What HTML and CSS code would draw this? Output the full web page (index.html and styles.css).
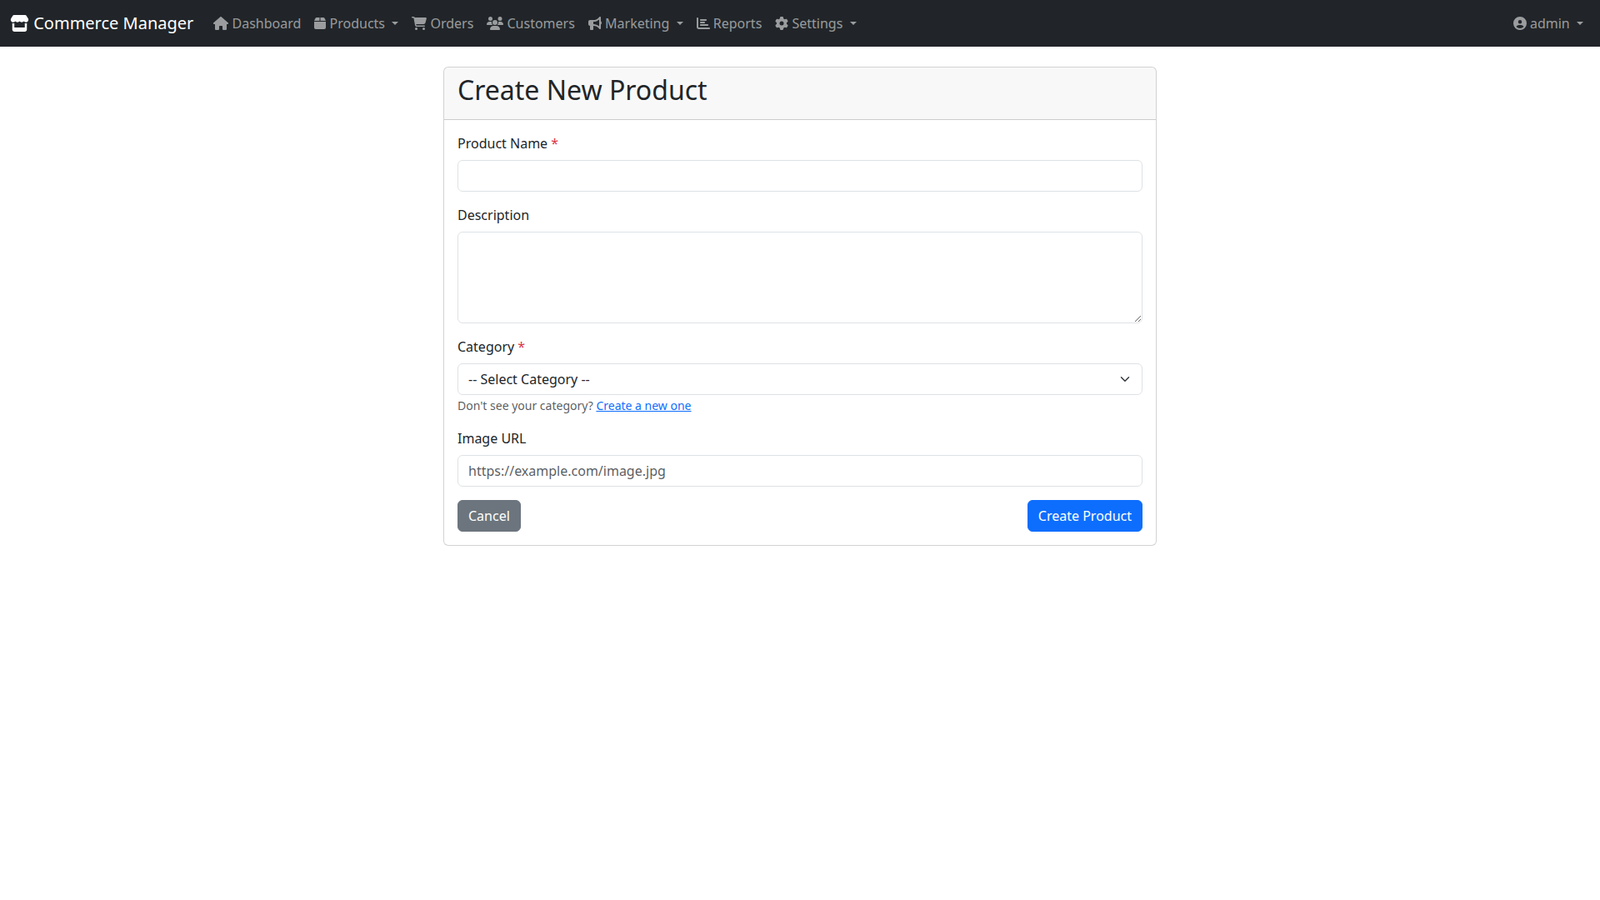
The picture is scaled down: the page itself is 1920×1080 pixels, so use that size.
FILE: index.html
```html
<!DOCTYPE html>
<html lang="en">
<head>
<meta charset="utf-8">
<title>Create New Product - Commerce Manager</title>
<link rel="stylesheet" href="styles.css">
</head>
<body>
<nav class="navbar">
  <a class="brand" href="#"><svg class="icon" viewBox="0 0 576 512"><path d="M547.6 103.8L490.3 13.1C485.2 5 476.1 0 466.4 0H109.6C99.9 0 90.8 5 85.7 13.1L28.3 103.8c-29.6 46.8-3.4 111.9 51.9 119.4c4 .5 8.1 .8 12.1 .8c26.1 0 49.3-11.4 65.2-29c15.9 17.6 39.1 29 65.2 29c26.1 0 49.3-11.4 65.2-29c15.9 17.6 39.1 29 65.2 29c26.2 0 49.3-11.4 65.2-29c16 17.6 39.1 29 65.2 29c4.1 0 8.1-.3 12.1-.8c55.5-7.4 81.8-72.5 52.1-119.4zM499.7 254.9l-.1 0c-5.3 .7-10.7 1.1-16.2 1.1c-12.4 0-24.3-1.9-35.4-5.3V384H128V250.6c-11.2 3.5-23.2 5.4-35.6 5.4c-5.5 0-11-.4-16.3-1.1l-.1 0c-4.1-.6-8.1-1.3-12-2.3V384v64c0 35.3 28.7 64 64 64H448c35.3 0 64-28.7 64-64V384 252.6c-4 1-8 1.8-12.3 2.3z"/></svg> Commerce Manager</a>
  <ul class="nav">
    <li><a class="nav-link" href="#"><svg class="icon" viewBox="0 0 576 512"><path d="M575.8 255.5c0 18-15 32.1-32 32.1h-32l.7 160.2c0 2.7-.2 5.4-.5 8.1V472c0 22.1-17.9 40-40 40H456c-1.1 0-2.2 0-3.3-.1c-1.4 .1-2.8 .1-4.2 .1H416 392c-22.1 0-40-17.9-40-40V448 384c0-17.7-14.3-32-32-32H256c-17.7 0-32 14.3-32 32v64 24c0 22.1-17.9 40-40 40H160 128.1c-1.5 0-3-.1-4.5-.2c-1.2 .1-2.4 .2-3.6 .2H104c-22.1 0-40-17.9-40-40V360c0-.9 0-1.9 .1-2.8V287.6H32c-18 0-32-14-32-32.1c0-9 3-17 10-24L266.4 8c7-7 15-8 22-8s15 2 21 7L564.8 231.5c8 7 12 15 11 24z"/></svg> Dashboard</a></li>
    <li><a class="nav-link toggle" href="#"><svg class="icon" viewBox="0 0 448 512"><path d="M50.7 58.5L0 160H208V32H93.7C75.5 32 58.9 42.3 50.7 58.5zM240 160H448L397.3 58.5C389.1 42.3 372.5 32 354.3 32H240V160zm208 32H0V416c0 35.3 28.7 64 64 64H384c35.3 0 64-28.7 64-64V192z"/></svg> Products </a></li>
    <li><a class="nav-link" href="#"><svg class="icon" viewBox="0 0 576 512"><path d="M0 24C0 10.7 10.7 0 24 0H69.5c22 0 41.5 12.8 50.6 32h411c26.3 0 45.5 25 38.6 50.4l-41 152.3c-8.5 31.4-37 53.3-69.5 53.3H170.7l5.4 28.5c2.2 11.3 12.1 19.5 23.6 19.5H488c13.3 0 24 10.7 24 24s-10.7 24-24 24H199.7c-34.6 0-64.3-24.6-70.7-58.5L77.4 54.5c-.7-3.8-4-6.5-7.9-6.5H24C10.7 48 0 37.3 0 24zM128 464a48 48 0 1 1 96 0 48 48 0 1 1 -96 0zm336-48a48 48 0 1 1 0 96 48 48 0 1 1 0-96z"/></svg> Orders</a></li>
    <li><a class="nav-link" href="#"><svg class="icon" viewBox="0 0 640 512"><path d="M144 0a80 80 0 1 1 0 160A80 80 0 1 1 144 0zM512 0a80 80 0 1 1 0 160A80 80 0 1 1 512 0zM0 298.7C0 239.8 47.8 192 106.7 192h42.7c15.9 0 31 3.5 44.6 9.7c-1.3 7.2-1.9 14.7-1.9 22.3c0 38.2 16.8 72.5 43.3 96c-.2 0-.4 0-.7 0H21.3C9.6 320 0 310.4 0 298.7zM405.3 320c-.2 0-.4 0-.7 0c26.6-23.5 43.3-57.8 43.3-96c0-7.6-.7-15-1.9-22.3c13.6-6.3 28.7-9.7 44.6-9.7h42.7C592.2 192 640 239.8 640 298.7c0 11.8-9.6 21.3-21.3 21.3H405.3zM224 224a96 96 0 1 1 192 0 96 96 0 1 1 -192 0zM128 485.3C128 411.7 187.7 352 261.3 352H378.7C452.3 352 512 411.7 512 485.3c0 14.7-11.9 26.7-26.7 26.7H154.7c-14.7 0-26.7-11.9-26.7-26.7z"/></svg> Customers</a></li>
    <li><a class="nav-link toggle" href="#"><svg class="icon" viewBox="0 0 512 512"><path d="M480 32c0-12.9-7.8-24.6-19.8-29.6s-25.7-2.2-34.9 6.9L381.7 53c-48 48-113.1 75-181 75H192 160 64c-35.3 0-64 28.7-64 64v96c0 35.3 28.7 64 64 64l0 128c0 17.7 14.3 32 32 32h64c17.7 0 32-14.3 32-32V352l8.7 0c67.9 0 133 27 181 75l43.6 43.6c9.2 9.2 22.9 11.9 34.9 6.9s19.8-16.6 19.8-29.6V300.4c18.6-8.8 32-32.5 32-60.4s-13.4-51.6-32-60.4V32zm-64 76.7V240 371.3C357.2 317.8 280.5 288 200.7 288H192V192h8.7c79.8 0 156.5-29.8 215.3-83.3z"/></svg> Marketing </a></li>
    <li><a class="nav-link" href="#"><svg class="icon" viewBox="0 0 512 512"><path d="M32 32c17.7 0 32 14.3 32 32V400c0 8.8 7.2 16 16 16H480c17.7 0 32 14.3 32 32s-14.3 32-32 32H80c-44.2 0-80-35.8-80-80V64C0 46.3 14.3 32 32 32zm96 96c0-17.7 14.3-32 32-32l192 0c17.7 0 32 14.3 32 32s-14.3 32-32 32l-192 0c-17.7 0-32-14.3-32-32zm32 64H288c17.7 0 32 14.3 32 32s-14.3 32-32 32H160c-17.7 0-32-14.3-32-32s14.3-32 32-32zm0 96H416c17.7 0 32 14.3 32 32s-14.3 32-32 32H160c-17.7 0-32-14.3-32-32s14.3-32 32-32z"/></svg> Reports</a></li>
    <li><a class="nav-link toggle" href="#"><svg class="icon" viewBox="0 0 512 512"><path d="M495.9 166.6c3.2 8.7 .5 18.4-6.4 24.6l-43.3 39.4c1.1 8.3 1.7 16.8 1.7 25.4s-.6 17.1-1.7 25.4l43.3 39.4c6.9 6.2 9.6 15.9 6.4 24.6c-4.4 11.9-9.7 23.3-15.8 34.3l-4.7 8.1c-6.6 11-14 21.4-22.1 31.2c-5.9 7.2-15.7 9.6-24.5 6.8l-55.7-17.7c-13.4 10.3-28.2 18.9-44 25.4l-12.5 57.1c-2 9.1-9 16.3-18.2 17.8c-13.8 2.3-28 3.5-42.5 3.5s-28.7-1.2-42.5-3.5c-9.2-1.5-16.2-8.7-18.2-17.8l-12.5-57.1c-15.8-6.5-30.6-15.1-44-25.4L83.1 425.9c-8.8 2.8-18.6 .3-24.5-6.8c-8.1-9.8-15.5-20.2-22.1-31.2l-4.7-8.1c-6.1-11-11.4-22.4-15.8-34.3c-3.2-8.7-.5-18.4 6.4-24.6l43.3-39.4C64.6 273.1 64 264.6 64 256s.6-17.1 1.7-25.4L22.4 191.2c-6.9-6.2-9.6-15.9-6.4-24.6c4.4-11.9 9.7-23.3 15.8-34.3l4.7-8.1c6.6-11 14-21.4 22.1-31.2c5.9-7.2 15.7-9.6 24.5-6.8l55.7 17.7c13.4-10.3 28.2-18.9 44-25.4l12.5-57.1c2-9.1 9-16.3 18.2-17.8C227.3 1.2 241.5 0 256 0s28.7 1.2 42.5 3.5c9.2 1.5 16.2 8.7 18.2 17.8l12.5 57.1c15.8 6.5 30.6 15.1 44 25.4l55.7-17.7c8.8-2.8 18.6-.3 24.5 6.8c8.1 9.8 15.5 20.2 22.1 31.2l4.7 8.1c6.1 11 11.4 22.4 15.8 34.3zM256 336a80 80 0 1 0 0-160 80 80 0 1 0 0 160z"/></svg> Settings </a></li>
  </ul>
  <ul class="nav nav-end">
    <li><a class="nav-link toggle" href="#"><svg class="icon" viewBox="0 0 512 512"><path d="M399 384.2C376.9 345.8 335.4 320 288 320H224c-47.4 0-88.9 25.8-111 64.2c35.2 39.2 86.2 63.8 143 63.8s107.8-24.7 143-63.8zM0 256a256 256 0 1 1 512 0A256 256 0 1 1 0 256zm256 16a72 72 0 1 0 0-144 72 72 0 1 0 0 144z"/></svg> admin </a></li>
  </ul>
</nav>
<main class="page">
  <section class="card">
    <header class="card-header"><h1 class="card-title">Create New Product</h1></header>
    <form class="card-body">
      <div class="field">
        <label class="label" for="name">Product Name <span class="req">*</span></label>
        <input class="control" id="name" type="text">
      </div>
      <div class="field">
        <label class="label" for="desc">Description</label>
        <textarea class="control" id="desc" rows="4"></textarea>
      </div>
      <div class="field">
        <label class="label" for="cat">Category <span class="req">*</span></label>
        <select class="control select" id="cat"><option>-- Select Category --</option></select>
        <small class="help">Don't see your category? <a class="link" href="#">Create a new one</a></small>
      </div>
      <div class="field">
        <label class="label" for="img">Image URL</label>
        <input class="control" id="img" type="text" placeholder="https://example.com/image.jpg">
      </div>
      <div class="actions">
        <a class="btn btn-secondary" href="#">Cancel</a>
        <button class="btn btn-primary" type="button">Create Product</button>
      </div>
    </form>
  </section>
</main>
</body>
</html>
```
FILE: styles.css
```css
* { box-sizing: border-box; }
html, body { margin: 0; padding: 0; }
body {
  font-family: "Noto Sans", sans-serif;
  font-size: 16px;
  line-height: 1.5;
  color: #212529;
  background: #fff;
}
a { text-decoration: none; }
.icon { height: 1em; fill: currentColor; vertical-align: -0.125em; }
.navbar {
  display: flex;
  align-items: center;
  height: 56px;
  padding: 8px 12px;
  background: #212529;
}
.brand {
  color: #fff;
  font-size: 20px;
  margin-right: 16px;
  padding: 5px 0;
  white-space: nowrap;
}
.brand .icon { width: 23px; }
.nav { display: flex; list-style: none; margin: 0; padding: 0; }
.nav-end { margin-left: auto; }
.nav-link {
  display: block;
  padding: 8px;
  color: rgba(255, 255, 255, 0.55);
  white-space: nowrap;
}
.toggle::after {
  content: "";
  display: inline-block;
  margin-left: 0.255em;
  vertical-align: 0.255em;
  border-top: 0.3em solid;
  border-right: 0.3em solid transparent;
  border-left: 0.3em solid transparent;
}
.page { width: 856px; margin: 24px auto 0; }
.card {
  border: 1px solid rgba(0, 0, 0, 0.175);
  border-radius: 6px;
  background: #fff;
}
.card-header {
  padding: 8px 16px;
  background: rgba(33, 37, 41, 0.03);
  border-bottom: 1px solid rgba(0, 0, 0, 0.175);
  border-radius: 5px 5px 0 0;
}
.card-title {
  margin: 0 0 8px;
  font-size: 32px;
  font-weight: 400;
  line-height: 1.2;
}
.card-body { padding: 16px; }
.field { margin-bottom: 16px; }
.label { display: inline-block; margin-bottom: 8px; }
.req { color: #dc3545; }
.control {
  display: block;
  width: 100%;
  padding: 6px 12px;
  font: inherit;
  color: #212529;
  background: #fff;
  border: 1px solid #dee2e6;
  border-radius: 6px;
  appearance: none;
}
.control::placeholder { color: rgba(33, 37, 41, 0.75); opacity: 1; }
textarea.control { resize: vertical; min-height: 38px; }
.select {
  padding-right: 36px;
  background-image: url("data:image/svg+xml,%3csvg xmlns='http://www.w3.org/2000/svg' viewBox='0 0 16 16'%3e%3cpath fill='none' stroke='%23343a40' stroke-linecap='round' stroke-linejoin='round' stroke-width='2' d='m2 5 6 6 6-6'/%3e%3c/svg%3e");
  background-repeat: no-repeat;
  background-position: right 12px center;
  background-size: 16px 12px;
}
.help { font-size: 14px; color: rgba(33, 37, 41, 0.75); }
.link { color: #0d6efd; text-decoration: underline; }
.actions { display: flex; justify-content: space-between; }
.btn {
  display: inline-block;
  padding: 6px 12px;
  font: inherit;
  line-height: 24px;
  color: #fff;
  border: 1px solid transparent;
  border-radius: 6px;
  cursor: pointer;
}
.btn-secondary { background: #6c757d; border-color: #6c757d; }
.btn-primary { background: #0d6efd; border-color: #0d6efd; }
```
